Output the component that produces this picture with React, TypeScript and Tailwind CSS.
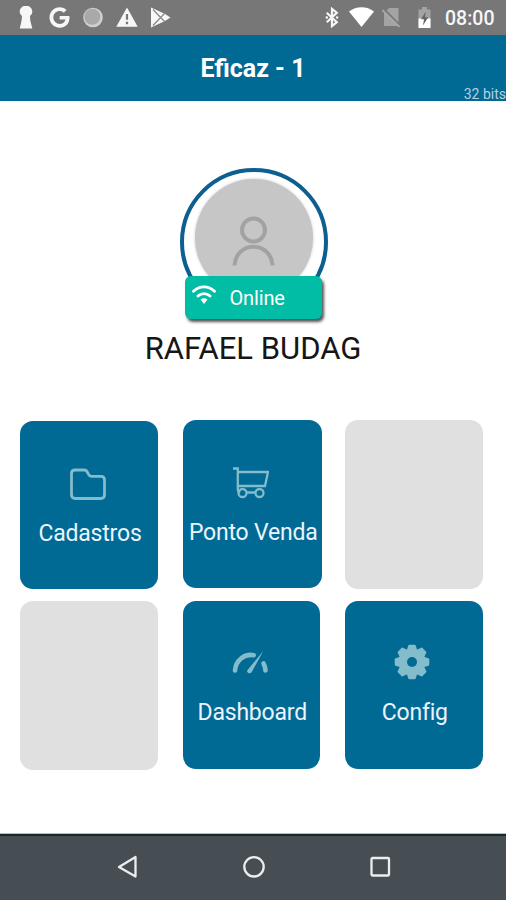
import type { ReactNode } from "react";
import { FaGoogle } from "react-icons/fa";

function StatusBar() {
  return (
    <div className="flex h-[34.5px] items-start bg-[#777777] pt-1.5 text-[#f7f7f7]">
      <svg className="ml-[19px] h-[23px] w-[14px]" viewBox="0 0 14 23" fill="currentColor">
        <path d="M4.500 0h5Q13.500 2 13.300 6q0 2.500-2.300 4l.3 4.500 2 8H.8l1.800-8L3 10Q.7 8.500.7 6 .5 2 4.500 0z" />
      </svg>
      <FaGoogle className="ml-4 mt-px h-[21px] w-[21px]" />
      <svg className="ml-[13px] mt-px h-[21px] w-[20px]" viewBox="0 0 20 20">
        <circle cx="10" cy="10" r="9.800" fill="#cfcfcf" />
        <circle cx="9.300" cy="9.300" r="8" fill="#a9a9a9" />
      </svg>
      <svg className="ml-[13px] mt-px h-[20px] w-[22px]" viewBox="0 0 22 20">
        <path d="M11 0.500 21.700 19.700H0.300z" fill="currentColor" />
        <path d="M11 7v5.800M11 14.800v2.400" stroke="#777777" strokeWidth="2.200" />
      </svg>
      <svg className="ml-[12px] mt-px h-[21px] w-[21px]" viewBox="0 0 21 21">
        <path d="M1 .5 15 7 20.500 10.500 15 14 1 20.500z" fill="currentColor" />
        <path d="M3 2.500 14.500 14.500M3 18.500 14.500 6.500" stroke="#8a8a8a" strokeWidth="1.300" />
      </svg>
      <svg className="ml-[154px] mt-px h-[21px] w-[14px]" viewBox="0 0 14 22" fill="none" stroke="currentColor" strokeWidth="2.300">
        <path d="M1.500 6 12 16 7 20V2L12 6 1.500 16" />
        <path d="M1.500 11h.1M12.300 11h.1" strokeWidth="2.600" strokeLinecap="round" />
      </svg>
      <svg className="ml-2.5 mt-px h-[20px] w-[25px]" viewBox="0 0 25 20" fill="#fff">
        <path d="M0 4.500C7-1.300 18-1.300 25 4.500L12.500 20z" />
      </svg>
      <svg className="ml-2 mt-px h-[20px] w-[20px]" viewBox="0 0 20 20">
        <path d="M7 1h8.500q1 0 1 1v17H2V6z" fill="#a3a3a3" />
        <path d="M1 1.700 19 19.700" stroke="#777777" strokeWidth="2.500" />
        <path d="M.2 3 17.500 20" stroke="#a9a9a9" strokeWidth="1.800" />
      </svg>
      <svg className="ml-4 mt-px h-[21px] w-[13px]" viewBox="0 0 13 21">
        <path d="M4 0h5v2.500h3.500V21H.5V2.500H4z" fill="#a3a3a3" />
        <path d="M.5 11.500h12V21H.5z" fill="#fff" />
        <path d="M7.800 4.500 3 12.300h3L5 18.500l5.200-8.200H7z" fill="#666" />
      </svg>
      <span className="ml-3.5 mt-px w-[54px] whitespace-nowrap text-[19.500px] font-medium leading-6">08:00</span>
    </div>
  );
}

function Card({ icon, label, className }: { icon: ReactNode; label: string; className: string }) {
  return (
    <div className={`flex h-[168px] flex-col items-center rounded-[13px] bg-[#006994] text-[#eaf5ff] ${className}`}>
      {icon}
      <span className="ml-0.5 whitespace-nowrap text-[23px] leading-7 tracking-[-0.2px]">{label}</span>
    </div>
  );
}

const iconClass = "h-9 w-9 shrink-0 text-[#83bccb]";

function FolderIcon() {
  return (
    <svg className={`${iconClass} mr-0.5 mb-[18px]`} viewBox="0 0 36 36" fill="none" stroke="currentColor" strokeWidth="2.800" strokeLinejoin="round">
      <path d="M5 4h9.500q1.700 0 2.500 1.500l1.700 3.200q.8 1.600 2.600 1.600H31q3.500 0 3.500 3.500V28.800q0 3.700-3.700 3.700H5.200Q1.500 32.500 1.500 28.800V7.500Q1.500 4 5 4z" />
    </svg>
  );
}

function CartIcon() {
  return (
    <svg className={`${iconClass} mr-0.5 mb-[18px]`} viewBox="0 0 36 36" fill="none" stroke="currentColor" strokeWidth="2.300">
      <path d="M0 3.500h4.800V24.500q0 2.500 2.500 2.500M5 7h30L32 21H5M14 27.500h9" />
      <circle cx="9.500" cy="28" r="4" />
      <circle cx="26.500" cy="28" r="4" />
    </svg>
  );
}

function GaugeIcon() {
  return (
    <svg className={`${iconClass} mr-0.5 mb-[19px]`} viewBox="0 0 36 36" fill="none" stroke="currentColor" strokeWidth="4.600" strokeLinecap="round">
      <path d="M3 26.500C3.700 16.500 12.200 9.500 21.700 11.200" />
      <path d="M31.500 19.500q1.700 3 2 7" />
      <path d="M31.300 7 19.800 28q-1.500 2-3.500 1-1.800-1.200-.6-3.200z" fill="currentColor" stroke="none" />
    </svg>
  );
}

function GearIcon() {
  return (
    <svg className={`${iconClass} mr-[3px] mb-[19px]`} viewBox="0 0 36 36">
      <g fill="currentColor">
        <circle cx="18" cy="18" r="13.500" />
        {[0, 45, 90, 135, 180, 225, 270, 315].map((angle) => (
          <path key={angle} d="M12.500 7 14.300 1.500q.3-.8 1-.8h5.400q.7 0 1 .8L23.500 7z" transform={`rotate(${angle} 18 18)`} />
        ))}
      </g>
      <circle cx="18" cy="18" r="5" fill="#006994" />
    </svg>
  );
}

function Profile() {
  return (
    <div className="flex flex-col items-center pt-[67px]">
      <div className="relative ml-px h-[148px] w-[148px] rounded-full border-4 border-[#0d5f90] pl-[11px] pt-[7px]">
        <div className="h-[118px] w-[118px] rounded-full bg-[#c6c6c6] shadow-[0_0_3px_#c6c6c6]">
          <svg className="h-[118px] w-[118px]" viewBox="0 0 118 118" fill="none" stroke="#a2a2a2" strokeWidth="4">
            <circle cx="58.500" cy="51" r="11.500" />
            <path d="M39.500 86.500C41 61.500 76 61.500 77.500 86.500" />
          </svg>
        </div>
        <div className="absolute left-px top-[104px] flex h-[42.500px] w-[137.500px] items-center rounded-md bg-[#02bda5] text-white shadow-[2px_3px_3px_#555]">
          <svg className="mb-1 ml-[7px] h-[20px] w-[24px]" viewBox="0 0 24 20" fill="none" stroke="currentColor" strokeWidth="2.800" strokeLinecap="round">
            <path d="M1.500 6.200C7.500.4 16.500.4 22.500 6.200M6 11c3.500-3.300 8.500-3.300 12 0" />
            <path d="M8.500 14.500q3.500-2.500 7 0L12 19z" fill="currentColor" stroke="none" />
          </svg>
          <span className="ml-3.5 mt-px text-[20px] leading-6 tracking-[-0.15px]">Online</span>
        </div>
      </div>
      <h1 className="mt-[14.500px] whitespace-nowrap text-[31px] leading-9 text-[#161616]">RAFAEL BUDAG</h1>
    </div>
  );
}

export default function App() {
  return (
    <div className="flex h-[900px] w-[506px] flex-col overflow-hidden bg-white font-[Roboto,sans-serif]">
      <StatusBar />
      <header className="flex h-[66.500px] flex-col items-center bg-[#006994] pt-[18.500px]">
        <span className="text-[25px] font-bold leading-8 text-white">Eficaz - 1</span>
        <span className="mt-px self-end text-[14px] leading-4 text-[#b9cfdf]">32 bits</span>
      </header>

      <main className="flex-1 bg-white">
        <Profile />
        <div className="ml-5 mt-[53px] flex items-start">
          <Card className="mt-[1.500px] w-[138px] pt-[45px]" icon={<FolderIcon />} label="Cadastros" />
          <Card className="ml-[25px] w-[138.500px] pt-[45px]" icon={<CartIcon />} label="Ponto Venda" />
          <div className="ml-[23.500px] h-[169px] w-[138px] rounded-[13px] bg-[#e0e0e0]" />
        </div>
        <div className="ml-5 mt-[12px] flex items-start">
          <div className="h-[169px] w-[138px] rounded-[13px] bg-[#e0e0e0]" />
          <Card className="ml-[24.500px] w-[137.500px] pt-[43px]" icon={<GaugeIcon />} label="Dashboard" />
          <Card className="ml-[25px] w-[137.500px] pt-[43px]" icon={<GearIcon />} label="Config" />
        </div>
      </main>

      <nav className="flex h-[67px] items-start border-t border-[#b9bdbe] bg-[#464e53]">
        <div className="flex h-full w-full border-t-2 border-[#142b2c] pt-[19px]">
          <svg className="ml-[117px] h-6 w-[21px]" viewBox="0 0 21 24" fill="none" stroke="#e9eef0" strokeWidth="2.300" strokeLinejoin="round">
            <path d="M18.500 2v19.500L2 12z" />
          </svg>
          <svg className="ml-[103.500px] h-6 w-6" viewBox="0 0 24 24" fill="none" stroke="#e9eef0" strokeWidth="2.300">
            <circle cx="12" cy="11.800" r="9.700" />
          </svg>
          <svg className="ml-[102.500px] h-6 w-6" viewBox="0 0 24 24" fill="none" stroke="#e9eef0" strokeWidth="2.300">
            <rect x="3.500" y="3" width="17.500" height="17.500" rx="1" />
          </svg>
        </div>
      </nav>
    </div>
  );
}
